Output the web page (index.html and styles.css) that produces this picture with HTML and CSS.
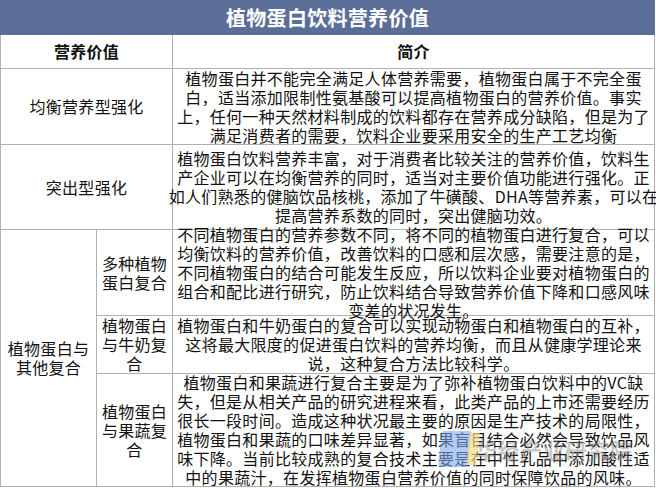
FILE: index.html
```html
<!DOCTYPE html>
<html lang="zh">
<head>
<meta charset="utf-8">
<link rel="stylesheet" href="styles.css">
</head>
<body>
<div class="page">
  <div class="table">
    <div class="title">植物蛋白饮料营养价值</div>
    <div class="cell head span2 first">营养价值</div>
    <div class="cell head">简介</div>

    <div class="cell span2 first">均衡营养型强化</div>
    <div class="cell desc">植物蛋白并不能完全满足人体营养需要，植物蛋白属于不完全蛋<br>白，适当添加限制性氨基酸可以提高植物蛋白的营养价值。事实<br>上，任何一种天然材料制成的饮料都存在营养成分缺陷，但是为了<br>满足消费者的需要，饮料企业要采用安全的生产工艺均衡</div>

    <div class="cell span2 first">突出型强化</div>
    <div class="cell desc">植物蛋白饮料营养丰富，对于消费者比较关注的营养价值，饮料生<br>产企业可以在均衡营养的同时，适当对主要价值功能进行强化。正<br>如人们熟悉的健脑饮品核桃，添加了牛磺酸、DHA等营养素，可以在<br>提高营养系数的同时，突出健脑功效。</div>

    <div class="cell first group">植物蛋白与<br>其他复合</div>
    <div class="cell sub">多种植物<br>蛋白复合</div>
    <div class="cell desc">不同植物蛋白的营养参数不同，将不同的植物蛋白进行复合，可以<br>均衡饮料的营养价值，改善饮料的口感和层次感，需要注意的是，<br>不同植物蛋白的结合可能发生反应，所以饮料企业要对植物蛋白的<br>组合和配比进行研究，防止饮料结合导致营养价值下降和口感风味<br>变差的状况发生。</div>

    <div class="cell sub">植物蛋白<br>与牛奶复<br>合</div>
    <div class="cell desc">植物蛋白和牛奶蛋白的复合可以实现动物蛋白和植物蛋白的互补，<br>这将最大限度的促进蛋白饮料的营养均衡，而且从健康学理论来<br>说，这种复合方法比较科学。</div>

    <div class="cell sub">植物蛋白<br>与果蔬复<br>合</div>
    <div class="cell desc">植物蛋白和果蔬进行复合主要是为了弥补植物蛋白饮料中的VC缺<br>失，但是从相关产品的研究进程来看，此类产品的上市还需要经历<br>很长一段时间。造成这种状况最主要的原因是生产技术的局限性，<br>植物蛋白和果蔬的口味差异显著，如果盲目结合必然会导致饮品风<br>味下降。当前比较成熟的复合技术主要是在中性乳品中添加酸性适<br>中的果蔬汁，在发挥植物蛋白营养价值的同时保障饮品的风味。</div>
  </div>
  <div class="watermark">
    <span class="wm-blue"></span>
    <span class="wm-yellow"></span>
    <span class="wm-text">华经产业研究院</span>
  </div>
</div>
</body>
</html>
```

FILE: styles.css
```css
html, body {
  margin: 0;
  padding: 0;
  background: #ffffff;
}

.page {
  position: relative;
  width: 656px;
  height: 488px;
  overflow: hidden;
  font-family: "Noto Sans CJK SC", "Noto Sans", sans-serif;
  color: #111111;
}

.table {
  display: grid;
  width: 655px;
  grid-template-columns: 97px 76px 482px;
  grid-template-rows: 35px 34px 76px 85px 86px 58px 113px;
}

.title {
  grid-column: 1 / 4;
  background: #5b6e97;
  color: #ffffff;
  font-weight: bold;
  font-size: 20px;
  letter-spacing: 0.3px;
  display: flex;
  align-items: center;
  justify-content: center;
  line-height: 1;
}

.cell {
  box-sizing: border-box;
  border-right: 1px solid #b0b0b0;
  border-bottom: 1px solid #b0b0b0;
  display: flex;
  align-items: center;
  justify-content: center;
  text-align: center;
  font-size: 16px;
  letter-spacing: 0.3px;
  line-height: 19px;
  white-space: nowrap;
}

.first {
  border-left: 1px solid #b0b0b0;
}

.span2 {
  grid-column: 1 / 3;
}

.head {
  font-weight: bold;
}

.group {
  grid-column: 1;
  grid-row: 5 / 8;
}

.desc {
  grid-column: 3;
}

.sub {
  grid-column: 2;
}

.watermark {
  position: absolute;
  left: 440px;
  top: 430px;
  width: 200px;
  height: 40px;
  pointer-events: none;
}

.wm-blue {
  position: absolute;
  left: 0;
  top: 1px;
  width: 30px;
  height: 36px;
  background: #7eaaf0;
  opacity: 0.6;
  transform: skewX(-6deg);
  border-radius: 3px;
}

.wm-yellow {
  position: absolute;
  left: 28px;
  top: 3px;
  width: 10px;
  height: 32px;
  background: #f6dc8c;
  opacity: 0.7;
  transform: skewX(-6deg);
}

.wm-text {
  position: absolute;
  left: 35px;
  top: 4px;
  font-size: 22px;
  line-height: 30px;
  font-weight: bold;
  color: #8a8a8a;
  opacity: 0.45;
  letter-spacing: 0.5px;
  white-space: nowrap;
}
```
